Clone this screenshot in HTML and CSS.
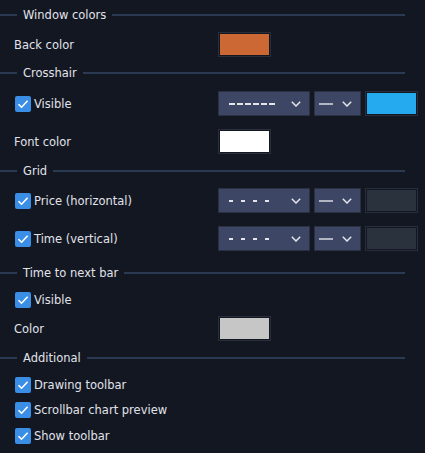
FILE: index.html
```html
<!DOCTYPE html>
<html>
<head>
<meta charset="utf-8">
<link rel="stylesheet" href="styles.css">
</head>
<body>
<div class="panel">
  <div class="head head-first"><span class="line-l"></span><span class="head-text">Window colors</span><span class="line-r"></span></div>
  <div class="row row-a">
    <div class="label">Back color</div>
    <div class="controls"><div class="swatch"><div class="fill orange"></div></div></div>
  </div>

  <div class="head head-2"><span class="line-l"></span><span class="head-text">Crosshair</span><span class="line-r"></span></div>
  <div class="row row-b">
    <div class="label"><span class="cb"><svg viewBox="0 0 16 16" width="16" height="16"><path d="M3.5 8.2 L6.6 11.2 L12.6 4.8" fill="none" stroke="#fff" stroke-width="1.6"/></svg></span>Visible</div>
    <div class="controls">
      <div class="select sel-wide">
        <svg class="pat" width="48" height="4" viewBox="0 0 48 4"><path d="M0 2 H6 M8 2 H14 M16 2 H22 M24 2 H30 M32 2 H38 M40 2 H46" stroke="#e3e5ea" stroke-width="2"/></svg>
        <svg class="chev" width="10" height="6" viewBox="0 0 10 6"><path d="M0.8 0.8 L5 5 L9.2 0.8" fill="none" stroke="#e3e5ea" stroke-width="1.5"/></svg>
      </div>
      <div class="select sel-narrow">
        <svg class="pat" width="14" height="4" viewBox="0 0 14 4"><path d="M0 2 H14" stroke="#e3e5ea" stroke-width="1.4"/></svg>
        <svg class="chev" width="10" height="6" viewBox="0 0 10 6"><path d="M0.8 0.8 L5 5 L9.2 0.8" fill="none" stroke="#e3e5ea" stroke-width="1.5"/></svg>
      </div>
      <div class="swatch"><div class="fill blue"></div></div>
    </div>
  </div>
  <div class="row row-c">
    <div class="label">Font color</div>
    <div class="controls"><div class="swatch"><div class="fill white"></div></div></div>
  </div>

  <div class="head head-3"><span class="line-l"></span><span class="head-text">Grid</span><span class="line-r"></span></div>
  <div class="row row-a">
    <div class="label"><span class="cb"><svg viewBox="0 0 16 16" width="16" height="16"><path d="M3.5 8.2 L6.6 11.2 L12.6 4.8" fill="none" stroke="#fff" stroke-width="1.6"/></svg></span>Price (horizontal)</div>
    <div class="controls">
      <div class="select sel-wide">
        <svg class="pat" width="48" height="4" viewBox="0 0 48 4"><path d="M0 2 H4 M12 2 H16 M24 2 H28 M36 2 H40" stroke="#e3e5ea" stroke-width="2"/></svg>
        <svg class="chev" width="10" height="6" viewBox="0 0 10 6"><path d="M0.8 0.8 L5 5 L9.2 0.8" fill="none" stroke="#e3e5ea" stroke-width="1.5"/></svg>
      </div>
      <div class="select sel-narrow">
        <svg class="pat" width="14" height="4" viewBox="0 0 14 4"><path d="M0 2 H14" stroke="#e3e5ea" stroke-width="1.4"/></svg>
        <svg class="chev" width="10" height="6" viewBox="0 0 10 6"><path d="M0.8 0.8 L5 5 L9.2 0.8" fill="none" stroke="#e3e5ea" stroke-width="1.5"/></svg>
      </div>
      <div class="swatch"><div class="fill dark"></div></div>
    </div>
  </div>
  <div class="row row-c">
    <div class="label"><span class="cb"><svg viewBox="0 0 16 16" width="16" height="16"><path d="M3.5 8.2 L6.6 11.2 L12.6 4.8" fill="none" stroke="#fff" stroke-width="1.6"/></svg></span>Time (vertical)</div>
    <div class="controls">
      <div class="select sel-wide">
        <svg class="pat" width="48" height="4" viewBox="0 0 48 4"><path d="M0 2 H4 M12 2 H16 M24 2 H28 M36 2 H40" stroke="#e3e5ea" stroke-width="2"/></svg>
        <svg class="chev" width="10" height="6" viewBox="0 0 10 6"><path d="M0.8 0.8 L5 5 L9.2 0.8" fill="none" stroke="#e3e5ea" stroke-width="1.5"/></svg>
      </div>
      <div class="select sel-narrow">
        <svg class="pat" width="14" height="4" viewBox="0 0 14 4"><path d="M0 2 H14" stroke="#e3e5ea" stroke-width="1.4"/></svg>
        <svg class="chev" width="10" height="6" viewBox="0 0 10 6"><path d="M0.8 0.8 L5 5 L9.2 0.8" fill="none" stroke="#e3e5ea" stroke-width="1.5"/></svg>
      </div>
      <div class="swatch"><div class="fill dark"></div></div>
    </div>
  </div>

  <div class="head head-4"><span class="line-l"></span><span class="head-text">Time to next bar</span><span class="line-r"></span></div>
  <div class="row row-small row-d">
    <div class="label"><span class="cb"><svg viewBox="0 0 16 16" width="16" height="16"><path d="M3.5 8.2 L6.6 11.2 L12.6 4.8" fill="none" stroke="#fff" stroke-width="1.6"/></svg></span>Visible</div>
  </div>
  <div class="row row-e">
    <div class="label">Color</div>
    <div class="controls"><div class="swatch"><div class="fill grey"></div></div></div>
  </div>

  <div class="head head-5"><span class="line-l"></span><span class="head-text">Additional</span><span class="line-r"></span></div>
  <div class="row row-small row-d">
    <div class="label"><span class="cb"><svg viewBox="0 0 16 16" width="16" height="16"><path d="M3.5 8.2 L6.6 11.2 L12.6 4.8" fill="none" stroke="#fff" stroke-width="1.6"/></svg></span>Drawing toolbar</div>
  </div>
  <div class="row row-small row-d">
    <div class="label"><span class="cb"><svg viewBox="0 0 16 16" width="16" height="16"><path d="M3.5 8.2 L6.6 11.2 L12.6 4.8" fill="none" stroke="#fff" stroke-width="1.6"/></svg></span>Scrollbar chart preview</div>
  </div>
  <div class="row row-small row-f">
    <div class="label"><span class="cb"><svg viewBox="0 0 16 16" width="16" height="16"><path d="M3.5 8.2 L6.6 11.2 L12.6 4.8" fill="none" stroke="#fff" stroke-width="1.6"/></svg></span>Show toolbar</div>
  </div>
</div>
</body>
</html>
```

FILE: styles.css
```css
html, body {
  margin: 0;
  padding: 0;
  background: #131722;
}
body {
  width: 425px;
  height: 453px;
  overflow: hidden;
  font-family: "DejaVu Sans", Verdana, sans-serif;
  font-size: 11.5px;
  color: #e1e3ea;
}
.panel {
  display: flex;
  flex-direction: column;
}
.head {
  display: flex;
  align-items: center;
  height: 20px;
  margin-right: 20px;
}
.head-first { margin-top: 5px; }
.head-2 { margin-top: 6px; }
.head-3 { margin-top: 7px; }
.head-4 { margin-top: 12px; }
.head-5 { margin-top: 7px; }
.line-l {
  width: 17px;
  height: 2px;
  background: #2a3a52;
}
.line-r {
  flex: 1;
  height: 2px;
  background: #2a3a52;
}
.head-text {
  padding: 0 6px;
  white-space: nowrap;
}
.row {
  display: flex;
  align-items: center;
  height: 25px;
  padding-left: 14px;
}
.row-a { margin-top: 7px; }
.row-b { margin-top: 8px; }
.row-c { margin-top: 13px; }
.row-small { height: 16px; }
.row-d { margin-top: 9px; }
.row-e { margin-top: 8px; }
.row-f { margin-top: 10px; }
.label {
  width: 204px;
  flex-shrink: 0;
  display: flex;
  align-items: center;
  white-space: nowrap;
}
.cb {
  width: 16px;
  height: 16px;
  margin-left: 1px;
  margin-right: 3px;
  border-radius: 2px;
  background: #3b8ee6;
  display: flex;
}
.controls {
  display: flex;
  gap: 4px;
}
.select {
  box-sizing: border-box;
  height: 25px;
  background: #3d4765;
  border: 1px solid #2b3142;
  display: flex;
  align-items: center;
  justify-content: space-between;
  padding: 0 8px 0 10px;
}
.sel-wide { width: 92px; }
.sel-narrow { width: 47px; padding-left: 4px; }
.chev { display: block; }
.pat { display: block; }
.swatch {
  box-sizing: border-box;
  width: 53px;
  height: 25px;
  border: 1px solid #2a2e3c;
  padding: 1px;
}
.fill {
  width: 100%;
  height: 100%;
}
.orange { background: #cc6833; }
.blue { background: #26aaef; }
.white { background: #ffffff; }
.grey { background: #c6c6c6; }
.dark { background: #29323d; }
```
